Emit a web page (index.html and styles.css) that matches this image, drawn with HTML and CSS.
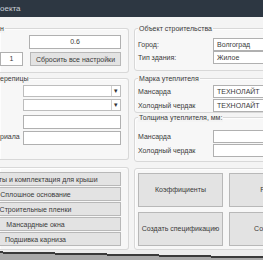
FILE: index.html
```html
<!DOCTYPE html>
<html>
<head>
<meta charset="utf-8">
<link rel="stylesheet" href="styles.css">
</head>
<body>
<div class="win">
  <div class="title">оекта</div>
  <div class="content">
    <div class="col left">
      <div class="grp g1">
        <span class="glabel">н</span>
        <div class="row"><div class="field center f-val">0.6</div></div>
        <div class="row gap8"><div class="field center f-one">1</div><div class="btn b-reset">Сбросить все настройки</div></div>
      </div>
      <div class="grp g2">
        <span class="glabel">ерепицы</span>
        <div class="row"><div class="combo"><span class="ctext"></span><span class="arrow">▾</span></div></div>
        <div class="row"><div class="combo"><span class="ctext"></span><span class="arrow">▾</span></div></div>
        <div class="row"><div class="field f-wide"></div></div>
        <div class="row spread"><span class="lbl">риала</span><div class="field f-wide"></div></div>
      </div>
      <div class="grp g3">
        <div class="btn lbtn">Элементы и комплектация для крыши</div>
        <div class="btn lbtn">Сплошное основание</div>
        <div class="btn lbtn">Строительные пленки</div>
        <div class="btn lbtn">Мансардные окна</div>
        <div class="btn lbtn">Подшивка карниза</div>
      </div>
    </div>
    <div class="col right">
      <div class="grp gA">
        <span class="glabel">Объект строительства</span>
        <div class="frow"><span class="flabel">Город:</span><div class="field rf">Волгоград</div></div>
        <div class="frow"><span class="flabel">Тип здания:</span><div class="field rf">Жилое</div></div>
      </div>
      <div class="grp gB">
        <span class="glabel">Марка утеплителя</span>
        <div class="frow"><span class="flabel">Мансарда</span><div class="field rf">ТЕХНОЛАЙТ</div></div>
        <div class="frow"><span class="flabel">Холодный чердак</span><div class="field rf">ТЕХНОЛАЙТ</div></div>
      </div>
      <div class="grp gB2">
        <span class="glabel">Толщина утеплителя, мм:</span>
        <div class="frow"><span class="flabel">Мансарда</span><div class="field rf num">200</div></div>
        <div class="frow"><span class="flabel">Холодный чердак</span><div class="field rf num">170</div></div>
      </div>
      <div class="grp gC">
        <div class="bgrid">
          <div class="btn big">Коэффициенты</div>
          <div class="btn big">Расчет</div>
          <div class="btn big">Создать спецификацию</div>
          <div class="btn big">Сохранить</div>
        </div>
      </div>
    </div>
  </div>
  <div class="taskbar"></div>
</div>
</body>
</html>
```
FILE: styles.css
```css
html, body {
  margin: 0;
  padding: 0;
  overflow: hidden;
  width: 263px;
  height: 260px;
  background: #f4f4f4;
}
.win {
  width: 263px;
  height: 260px;
  display: flex;
  flex-direction: column;
  font-family: "Liberation Sans", Arial, sans-serif;
  font-size: 7px;
  color: #3a3a3a;
  overflow: hidden;
}
.title {
  height: 17px;
  line-height: 17px;
  background: #2d3742;
  color: #c9d0d7;
  font-size: 8px;
  flex: none;
}
.content {
  display: flex;
  gap: 5px;
  padding-top: 11px;
  height: 222px;
  flex: none;
}
.col {
  display: flex;
  flex-direction: column;
  flex: none;
}
.left { width: 129px; }
.right { width: 200px; }
.grp {
  position: relative;
  border: 1px solid #d8d8d8;
  border-radius: 3px;
  box-sizing: border-box;
  background: #f7f7f7;
  box-shadow: inset 1px 1px 0 #fdfdfd;
}
.left .grp {
  border-left: none;
  border-top-left-radius: 0;
  border-bottom-left-radius: 0;
}
.glabel {
  position: absolute;
  top: -5px;
  left: 3px;
  padding: 0 1px;
  background: #f4f4f4;
  line-height: 9px;
  white-space: nowrap;
  color: #3a3a3a;
}
.left .glabel { left: 0; padding-left: 0; }
.row {
  display: flex;
  align-items: center;
}
.gap8 { gap: 7px; }
.field {
  height: 14px;
  box-sizing: border-box;
  border: 1px solid #b0b0b0;
  background: #fff;
  line-height: 12px;
  padding: 0 3px;
  white-space: nowrap;
  overflow: hidden;
}
.center { text-align: center; }
.g1 {
  height: 45px;
  padding: 6px 7px 0 0;
  display: flex;
  flex-direction: column;
  gap: 3px;
}
.f-val { margin-left: 29px; width: 92px; }
.f-one { width: 23px; }
.btn {
  box-sizing: border-box;
  border: 1px solid #b8b8b8;
  background: #e3e3e3;
  display: flex;
  align-items: center;
  justify-content: center;
  white-space: nowrap;
  overflow: hidden;
}
.b-reset { width: 91px; height: 14px; }
.g2 {
  margin-top: 5px;
  height: 83px;
  padding: 6px 7px 0 0;
  display: flex;
  flex-direction: column;
  gap: 2px;
}
.combo {
  margin-left: 23px;
  width: 98px;
  height: 12px;
  box-sizing: border-box;
  border: 1px solid #bdbdbd;
  background: #fff;
  display: flex;
  justify-content: flex-end;
  align-items: center;
}
.arrow {
  width: 8px;
  height: 10px;
  border-left: 1px solid #d0d0d0;
  font-size: 7px;
  line-height: 10px;
  text-align: center;
  color: #333;
}
.f-wide { margin-left: 23px; width: 98px; }
.spread { justify-content: space-between; }
.spread .f-wide { margin-left: 0; }
.lbl { padding-bottom: 2px; }
.g2 .row:nth-child(4) { margin-top: 2px; }
.g3 {
  margin-top: 7px;
  height: 83px;
  padding: 4px 8px 0 0;
  display: flex;
  flex-direction: column;
  gap: 1px;
}
.lbtn {
  height: 14px;
  width: 171px;
  margin-left: -50px;
  flex: none;
}
.gA {
  height: 43px;
  padding: 9px 0 0 3px;
  display: flex;
  flex-direction: column;
}
.frow {
  display: flex;
  align-items: center;
  height: 13px;
}
.flabel {
  width: 75px;
  flex: none;
}
.rf {
  height: 13px;
  line-height: 11px;
  width: 90px;
  flex: none;
}
.num { text-align: right; padding-right: 10px; }
.gB {
  margin-top: 7px;
  height: 35px;
  padding: 6px 0 0 3px;
  display: flex;
  flex-direction: column;
  gap: 1px;
}
.gB2 {
  margin-top: 4px;
  height: 45px;
  padding: 12px 0 0 3px;
  display: flex;
  flex-direction: column;
  gap: 1px;
}
.gC {
  margin-top: 6px;
  height: 83px;
  padding: 4px 0 0 3px;
}
.bgrid {
  display: grid;
  grid-template-columns: 85px 85px;
  grid-auto-rows: 34px;
  column-gap: 6px;
  row-gap: 5px;
}
.big { height: 34px; }
.taskbar {
  flex: none;
  height: 10px;
  background: linear-gradient(181.1deg, #ececec 0, #ececec 6.5px, #3a3a3a 6.5px, #3a3a3a 8.5px, #a9a9a9 8.5px, #a9a9a9 100%);
}
```
